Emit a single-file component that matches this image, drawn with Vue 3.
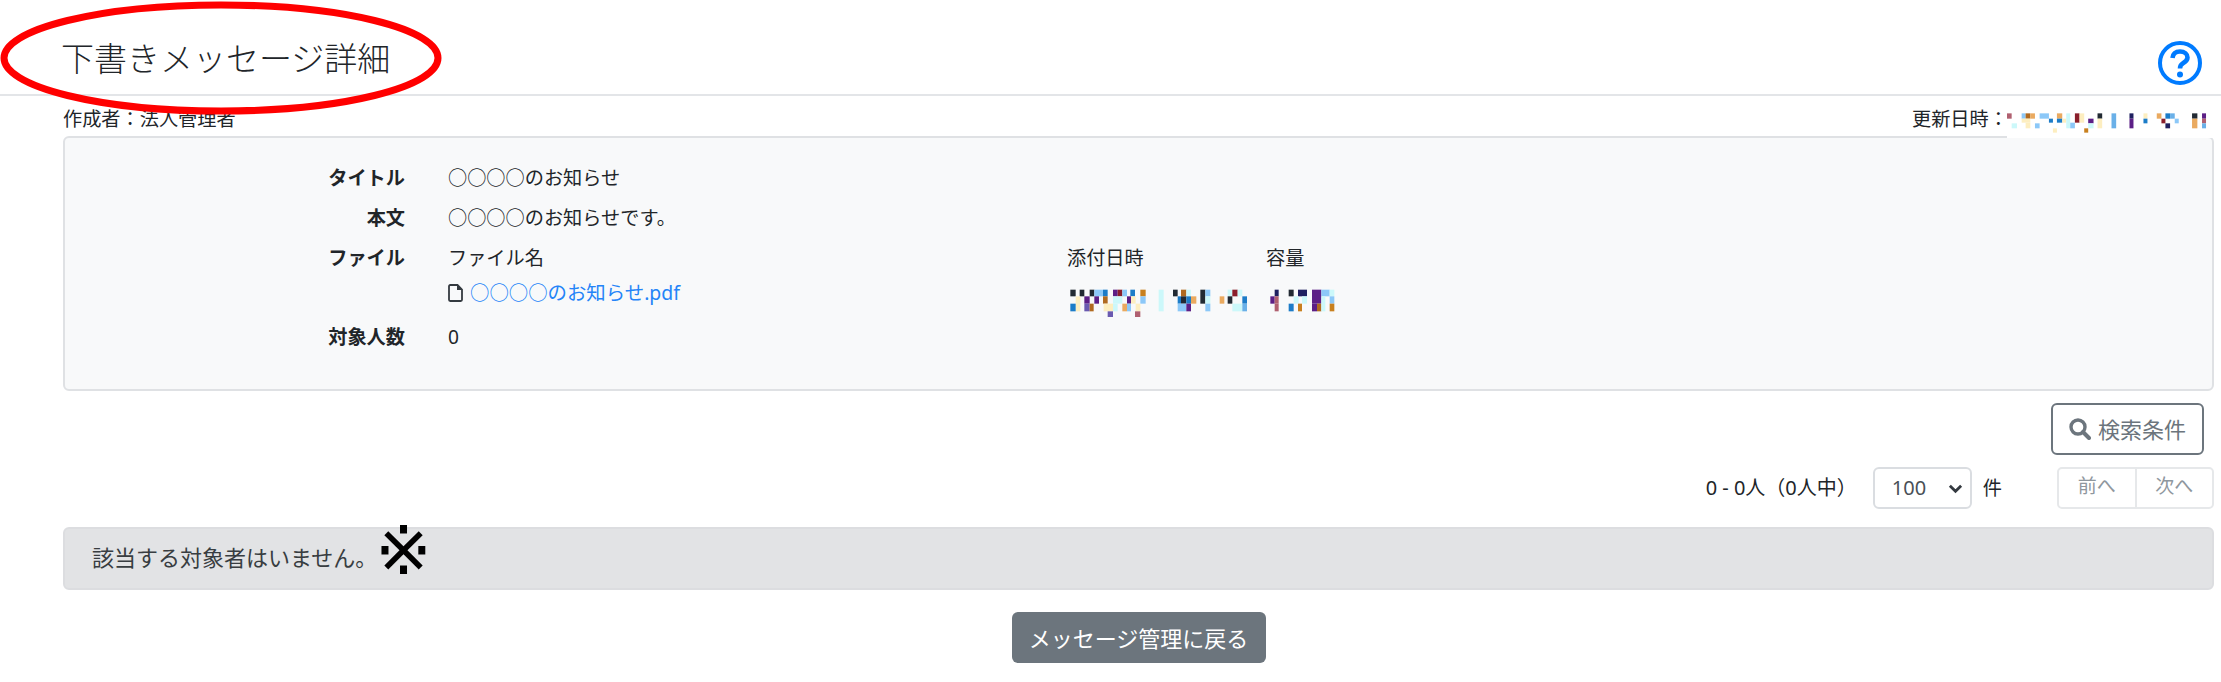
<script setup>
const shades = {
  k: '#222a33', b: '#1c7cc8', l: '#8cc8f8', m: '#6ab0e8', c: '#ccf8fa', p: '#5c1f86', r: '#8a1f2c',
  o: '#c8801f', a: '#eaaa60', y: '#fdeec0', v: '#6a5ab0', w: '#b06070', n: '#1f2060', t: '#b06a20'
}
const toRects = list => list.map(([x, y, w, h, c]) => ({ x, y, w, h, fill: shades[c] }))

const stampRects = toRects([
  [470,280,14,16,'w'],[484,310,16,15,'c'],[514,280,12,16,'l'],[526,280,14,16,'t'],[540,280,14,16,'a'],
  [514,296,26,12,'y'],[526,308,14,17,'y'],[554,310,14,15,'l'],[568,280,28,16,'l'],[596,296,12,12,'b'],
  [620,280,16,16,'a'],[620,296,16,12,'b'],[636,296,12,12,'y'],[608,325,12,13,'y'],[648,280,12,45,'c'],
  [660,308,14,17,'l'],[674,280,14,28,'r'],[688,280,14,28,'y'],[702,325,12,13,'o'],[714,296,16,14,'p'],
  [714,310,16,15,'c'],[742,280,14,16,'k'],[742,296,14,29,'y'],[784,280,14,45,'m'],[838,280,12,16,'n'],
  [838,296,12,29,'p'],[880,280,12,16,'y'],[880,296,12,14,'b'],[920,280,14,16,'a'],[934,296,12,14,'r'],
  [946,280,14,16,'b'],[960,280,14,16,'m'],[946,310,14,15,'n'],[974,296,12,14,'l'],[1026,280,16,16,'k'],
  [1026,296,16,29,'a'],[1056,280,12,16,'p'],[1056,296,12,14,'w'],[1056,310,12,15,'m']
])
const attachRects = toRects([
  [120,180,16,20,'k'],[148,180,14,20,'k'],[178,180,14,20,'k'],[192,180,26,20,'l'],[218,180,14,20,'b'],
  [248,180,14,20,'p'],[262,180,14,20,'r'],[276,180,14,20,'l'],[300,180,14,20,'b'],[330,180,16,20,'o'],
  [136,200,14,45,'y'],[162,200,16,22,'p'],[192,200,14,22,'p'],[218,200,14,22,'t'],[248,200,28,22,'c'],
  [290,200,12,22,'p'],[302,200,14,22,'y'],[330,200,16,22,'l'],[120,222,16,23,'b'],[162,222,16,23,'v'],
  [178,222,12,23,'t'],[220,222,28,23,'y'],[248,222,14,23,'c'],[276,222,14,23,'a'],[290,222,12,23,'l'],
  [316,222,14,23,'y'],[232,245,16,17,'v'],[314,245,16,17,'w'],[385,180,15,65,'c'],
  [428,180,14,20,'k'],[452,180,16,20,'t'],[468,180,14,20,'c'],[510,180,15,42,'k'],[525,180,15,20,'l'],
  [592,180,14,20,'c'],[606,180,16,20,'r'],[622,180,14,20,'c'],[442,200,10,22,'b'],[452,200,16,22,'k'],
  [468,200,14,22,'b'],[482,200,16,22,'a'],[525,200,15,22,'c'],[568,200,14,22,'a'],[592,200,14,22,'k'],
  [636,200,14,22,'b'],[442,222,26,23,'l'],[468,222,14,23,'p'],[525,222,15,23,'l'],[606,222,30,23,'c'],
  [636,222,14,23,'m']
])
const sizeRects = toRects([
  [733,180,12,20,'n'],[720,200,13,22,'p'],[733,200,12,22,'w'],[733,222,12,23,'w'],[775,180,15,20,'k'],
  [803,180,27,20,'n'],[775,222,15,23,'b'],[790,200,15,22,'c'],[803,222,12,23,'o'],[815,200,15,22,'c'],
  [845,180,28,42,'p'],[845,222,15,23,'p'],[860,222,13,23,'t'],[873,180,25,20,'l'],[873,200,12,45,'c'],
  [898,180,14,20,'c'],[898,200,14,22,'l'],[898,222,14,23,'o']
])
</script>

<template>
  <div class="page">
    <header class="head">
      <h1 class="title">下書きメッセージ詳細</h1>
      <svg class="help" viewBox="0 0 44 44" aria-label="ヘルプ">
        <circle cx="22" cy="22" r="20" fill="none" stroke="#007bff" stroke-width="4" />
        <path d="M14.5 17 C15 12.5 18 10.5 22 10.5 C26.5 10.5 29.5 13 29.5 16.5 C29.5 19.5 27.5 20.8 25 22.3 C23 23.5 22 24.8 22 27.5" fill="none" stroke="#007bff" stroke-width="4.6" />
        <circle cx="22" cy="33.5" r="3" fill="#007bff" />
      </svg>
    </header>

    <div class="meta">
      <span>作成者：法人管理者</span>
      <span class="updated">更新日時：</span>
    </div>

    <section class="card">
      <div class="row">
        <div class="label">タイトル</div>
        <div class="value">○○○○のお知らせ</div>
      </div>
      <div class="row">
        <div class="label">本文</div>
        <div class="value">○○○○のお知らせです。</div>
      </div>
      <div class="row file-row">
        <div class="label">ファイル</div>
        <div class="files">
          <div class="file-col name-col">
            <div>ファイル名</div>
            <div class="file-link">
              <svg class="doc" viewBox="0 0 15 18">
                <path d="M1 2.2 A1.2 1.2 0 0 1 2.2 1 H9.5 L14 5.5 V15.8 A1.2 1.2 0 0 1 12.8 17 H2.2 A1.2 1.2 0 0 1 1 15.8 Z" fill="none" stroke="#343a40" stroke-width="1.8" />
                <path d="M9 1 L14 6 H9 Z" fill="#343a40" />
              </svg>
              <a href="#" class="link">○○○○のお知らせ.pdf</a>
            </div>
          </div>
          <div class="file-col date-col">添付日時</div>
          <div class="file-col">容量</div>
        </div>
      </div>
      <div class="row count-row">
        <div class="label">対象人数</div>
        <div class="value">0</div>
      </div>
      <svg class="mosaic attach" viewBox="110 175 810 90">
        <rect v-for="(r, i) in attachRects" :key="i" :x="r.x" :y="r.y" :width="r.w" :height="r.h" :fill="r.fill" />
        <rect v-for="(r, i) in sizeRects" :key="'s' + i" :x="r.x" :y="r.y" :width="r.w" :height="r.h" :fill="r.fill" />
      </svg>
    </section>

    <div class="tools">
      <button class="search">
        <svg class="search-icon" viewBox="0 0 22 22">
          <circle cx="9" cy="9" r="7" fill="none" stroke="#6c757d" stroke-width="3.4" />
          <path d="M14 14 L20 20" stroke="#6c757d" stroke-width="4" stroke-linecap="round" />
        </svg>
        検索条件
      </button>
    </div>

    <div class="paging">
      <span class="range">0 - 0人（0人中）</span>
      <div class="select">
        <span>100</span>
        <svg class="chev" viewBox="0 0 16 16"><path d="M2 5l6 6 6-6" fill="none" stroke="#343a40" stroke-width="3" /></svg>
      </div>
      <span class="unit">件</span>
      <div class="pager">
        <span class="page-btn">前へ</span>
        <span class="page-btn">次へ</span>
      </div>
    </div>

    <div class="alert">
      該当する対象者はいません。
      <span class="mark">※</span>
    </div>

    <div class="back-wrap">
      <button class="back">メッセージ管理に戻る</button>
    </div>

    <svg class="oval" viewBox="0 0 446 120">
      <ellipse cx="221" cy="58" rx="217" ry="53" fill="none" stroke="#ff0000" stroke-width="7" />
    </svg>

    <div class="stamp-cover">
      <svg class="mosaic stamp" viewBox="470 270 643 72">
        <rect v-for="(r, i) in stampRects" :key="i" :x="r.x" :y="r.y" :width="r.w" :height="r.h" :fill="r.fill" />
      </svg>
    </div>
  </div>
</template>

<style>
html, body { margin: 0; background: #fff; }
</style>

<style scoped>
.page {
  position: relative;
  box-sizing: border-box;
  width: 2221px;
  height: 682px;
  padding: 0 7px 0 63px;
  overflow: hidden;
  font-family: "Noto Sans", "Noto Sans CJK JP", sans-serif;
  font-size: 19.2px;
  line-height: 28px;
  color: #212529;
}
.head {
  display: flex;
  justify-content: space-between;
  align-items: flex-end;
  height: 96px;
  margin: 0 -7px 0 -63px;
  padding: 0 19px 9px 61px;
  box-sizing: border-box;
  border-bottom: 2px solid #e3e5e8;
}
.title {
  margin: 0 0 4px;
  font-size: 33px;
  line-height: 44px;
  font-weight: 300;
  color: #212529;
}
.help { width: 44px; height: 44px; }
.meta {
  display: flex;
  justify-content: space-between;
  height: 40px;
  padding-top: 9px;
  box-sizing: border-box;
}
.updated { width: 302px; }
.card {
  position: relative;
  box-sizing: border-box;
  height: 255px;
  padding: 26px 0 0;
  background: #f8f9fa;
  border: 2px solid #dfe1e4;
  border-radius: 6px;
}
.row { display: flex; height: 40px; align-items: flex-start; }
.label {
  width: 340px;
  text-align: right;
  font-weight: 700;
}
.value { margin-left: 43px; }
.files { display: flex; margin-left: 43px; }
.file-col { line-height: 28px; }
.name-col { width: 619px; }
.date-col { width: 199px; }
.file-row { height: 79px; }
.file-link {
  display: flex;
  align-items: center;
  gap: 7px;
  margin-top: 7px;
}
.doc { width: 15px; height: 18px; }
.link { color: #2484f8; text-decoration: none; font-size: 19.4px; }
.mosaic { position: absolute; display: block; }
.attach { left: 1002px; top: 150px; width: 270px; height: 30px; }
.tools { display: flex; justify-content: flex-end; padding: 12px 10px 0 0; }
.search {
  display: flex;
  align-items: center;
  justify-content: center;
  gap: 7px;
  width: 153px;
  height: 52px;
  padding: 0;
  background: #fff;
  border: 2px solid #6c757d;
  border-radius: 6px;
  color: #6c757d;
  font: inherit;
  font-size: 22px;
}
.search-icon { width: 22px; height: 22px; }
.paging {
  display: flex;
  align-items: center;
  justify-content: flex-end;
  height: 42px;
  margin-top: 12px;
}
.range { font-size: 20px; }
.select {
  box-sizing: border-box;
  display: flex;
  align-items: center;
  justify-content: space-between;
  width: 99px;
  height: 42px;
  margin-left: 16px;
  padding: 0 7px 0 17px;
  background: #fff;
  border: 2px solid #dadde1;
  border-radius: 6px;
  color: #495057;
  font-size: 20px;
}
.chev { width: 15px; height: 15px; }
.unit { margin-left: 11px; }
.pager {
  display: flex;
  margin-left: 55px;
  width: 157px;
  height: 42px;
  box-sizing: border-box;
  border: 2px solid #e6e8ea;
  border-radius: 5px;
}
.page-btn {
  box-sizing: border-box;
  flex: 1;
  text-align: center;
  line-height: 34px;
  color: #8f979e;
  font-size: 19px;
}
.page-btn + .page-btn { border-left: 2px solid #e6e8ea; }
.alert {
  position: relative;
  box-sizing: border-box;
  height: 63px;
  margin-top: 18px;
  padding: 14px 27px;
  background: #e2e3e5;
  border: 2px solid #dcdde0;
  border-radius: 6px;
  color: #383d41;
  font-size: 22px;
}
.mark {
  position: absolute;
  left: 310px;
  top: -6px;
  font-family: "DejaVu Sans", "Noto Sans CJK JP", sans-serif;
  font-size: 68px;
  line-height: 56px;
  font-weight: 400;
  color: #000;
}
.back-wrap { display: flex; justify-content: center; margin-top: 22px; }
.back {
  width: 254px;
  height: 51px;
  padding: 0;
  background: #6c757d;
  border: none;
  border-radius: 6px;
  color: #fff;
  font: inherit;
  font-size: 22px;
}
.oval { position: absolute; left: 0; top: 0; width: 446px; height: 120px; pointer-events: none; }
.stamp-cover {
  position: absolute;
  left: 2007px;
  top: 110px;
  width: 214px;
  height: 28px;
  background: #fff;
}
.stamp { left: 0; top: 0; width: 214px; height: 24px; }
</style>
